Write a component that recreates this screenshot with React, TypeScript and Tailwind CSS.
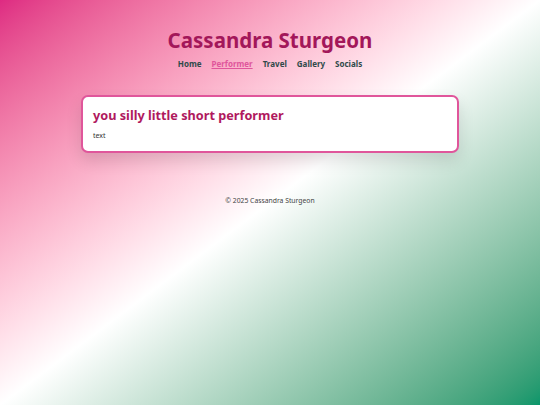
import React from "react";

const links = ["Home", "Performer", "Travel", "Gallery", "Socials"];

export default function App() {
  return (
    <div
      className="min-h-screen w-full bg-gradient-to-br from-[#de2a82] via-white to-[#05966a] flex flex-col items-center"
      style={{ fontFamily: '"Noto Sans", "Open Sans", sans-serif' }}
    >
      {/* Header */}
      <header className="pt-[26px] flex flex-col items-center">
        <h1 className="text-[20.5px] leading-[28px] font-bold text-[#a3175a]">Cassandra Sturgeon</h1>
        <nav className="mt-[4px] flex gap-[10px] text-[8px] font-bold text-[#2f4a4a]">
          {links.map((l) => (
            <a
              key={l}
              href="#"
              className={l === "Performer" ? "text-[#e0559b] underline" : ""}
            >
              {l}
            </a>
          ))}
        </nav>
      </header>

      {/* Card */}
      <main className="mt-[25px] w-[378px]">
        <section className="bg-white border-2 border-[#e0569b] rounded-[7px] shadow-[0_8px_16px_rgba(0,0,0,0.12)] px-[10px] pt-[9px] pb-[9px]">
          <h2 className="text-[12.7px] leading-[19px] font-bold text-[#b0195e]">you silly little short performer</h2>
          <p className="mt-[6px] text-[7px] text-[#333]">text</p>
        </section>
      </main>

      <footer className="mt-[43px] text-[6.8px] text-[#444]">© 2025 Cassandra Sturgeon</footer>
    </div>
  );
}
